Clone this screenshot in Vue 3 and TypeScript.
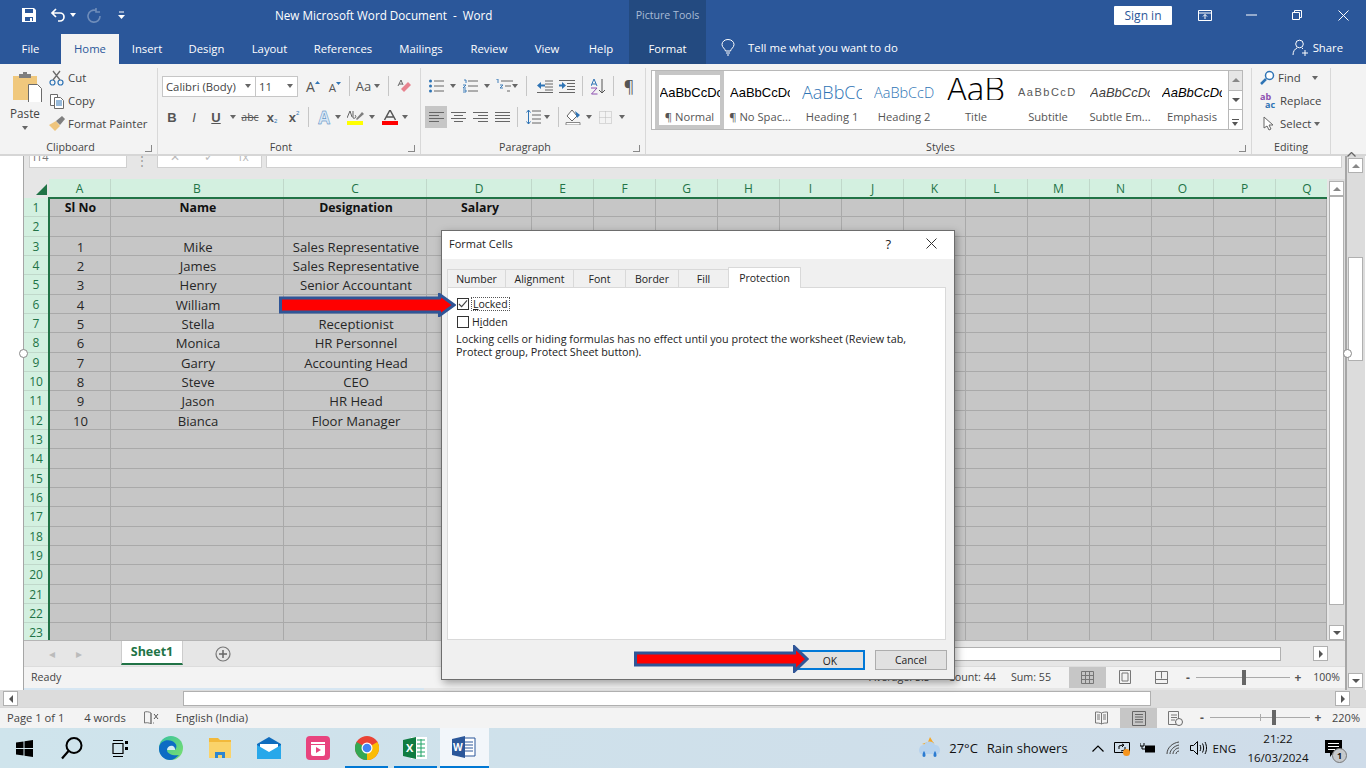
<script setup lang="ts">
const tabs: [string, number][] = [['File', 61], ['Home', 58], ['Insert', 56], ['Design', 63], ['Layout', 63], ['References', 84], ['Mailings', 72], ['Review', 64], ['View', 52], ['Help', 56], ['Format', 77]]
const styles = [
  ['AaBbCcDc', '¶ Normal', 'normal'], ['AaBbCcDc', '¶ No Spac...', 'nospace'], ['AaBbCc', 'Heading 1', 'h1'], ['AaBbCcD', 'Heading 2', 'h2'],
  ['AaB', 'Title', 'title'], ['AaBbCcD', 'Subtitle', 'subtitle'], ['AaBbCcDc', 'Subtle Em...', 'subtle'], ['AaBbCcDc', 'Emphasis', 'emph'],
]
const cols = 'ABCDEFGHIJKLMNOPQ'.split('')
const data: string[][] = [
  ['Sl No', 'Name', 'Designation', 'Salary'], [],
  ['1', 'Mike', 'Sales Representative'], ['2', 'James', 'Sales Representative'], ['3', 'Henry', 'Senior Accountant'],
  ['4', 'William', ''], ['5', 'Stella', 'Receptionist'], ['6', 'Monica', 'HR Personnel'], ['7', 'Garry', 'Accounting Head'],
  ['8', 'Steve', 'CEO'], ['9', 'Jason', 'HR Head'], ['10', 'Bianca', 'Floor Manager'],
]
const rows = Array.from({ length: 23 }, (_, i) => i + 1)
const dlgTabs = ['Number', 'Alignment', 'Font', 'Border', 'Fill', 'Protection']
function cell(r: number, c: number): string {
  return data[r - 1]?.[c] ?? ''
}
</script>

<template>
  <div class="app">
    <header class="titlebar">
      <div class="qat">
        <svg class="save" width="16" height="16" viewBox="0 0 16 16"><path d="M1 1h12l2 2v12H1z" fill="#fff"/><path d="M4 2h8v4H4z" fill="#2b579a"/><path d="M4 10h8v4H4z" fill="#2b579a"/><path d="M9 11h2v3H9z" fill="#fff"/></svg>
        <svg class="undo" width="16" height="16" viewBox="0 0 16 16"><path d="M6 2 2 6l4 4M2 6h8a4 4 0 0 1 0 8H8" fill="none" stroke="#fff" stroke-width="1.7"/></svg>
        <i class="caret white small"></i>
        <svg class="redo" width="16" height="16" viewBox="0 0 16 16"><path d="M10 3.500A6 6 0 1 0 14 9M10 1v4h4" fill="none" stroke="#6f8dba" stroke-width="1.6"/></svg>
        <svg class="cust" width="7" height="8" viewBox="0 0 7 8"><path d="M1 1h5" stroke="#fff"/><path d="M0 4h7L3.500 8z" fill="#fff"/></svg>
      </div>
      <div class="doc-title">New Microsoft Word Document &nbsp;-&nbsp; Word</div>
      <div class="context">Picture Tools</div>
      <div class="spacer"></div>
      <div class="signin">Sign in</div>
      <div class="win">
        <svg width="14" height="11" viewBox="0 0 14 11"><path d="M.5.5h13v10H.5zM.5 3h13M7 9V4.500M5 6.500l2-2 2 2" fill="none" stroke="#fff"/></svg>
      </div>
      <div class="win"><svg width="11" height="2" viewBox="0 0 11 2"><path d="M0 1h11" stroke="#fff"/></svg></div>
      <div class="win"><svg width="10" height="10" viewBox="0 0 10 10"><path d="M.5 2.500h7v7h-7zM2.500 2.500v-2h7v7h-2" fill="none" stroke="#fff"/></svg></div>
      <div class="win"><svg width="11" height="11" viewBox="0 0 11 11"><path d="m.5.5 10 10M10.500.5l-10 10" stroke="#fff"/></svg></div>
    </header>

    <nav class="tabs">
      <div v-for="t in tabs" :key="t[0]" class="tab" :class="{ active: t[0] === 'Home', fmt: t[0] === 'Format' }" :style="{ width: t[1] + 'px' }">{{ t[0] }}</div>
      <div class="tell">
        <svg width="14" height="17" viewBox="0 0 14 17"><path d="M4.500 12C4 9.500 1 8.500 1 5.500a6 5 0 0 1 12 0c0 3-3 4-3.500 6.500zM5 14h4M6 16h2" fill="none" stroke="#fff" stroke-width="1"/></svg>
        <span>Tell me what you want to do</span>
      </div>
      <div class="spacer"></div>
      <div class="share">
        <svg width="17" height="17" viewBox="0 0 17 17"><circle cx="7.500" cy="5" r="3.800" fill="none" stroke="#fff"/><path d="M1 16c0-4 2-6 4-7M10 9l1 1M10 14h6M13 11v6" fill="none" stroke="#fff"/></svg>
        <span>Share</span>
      </div>
    </nav>

    <section class="ribbon">
      <div class="grp g-clip">
        <div class="grp-body clip">
          <div class="paste">
            <svg class="paste-ic" width="30" height="30" viewBox="0 0 30 30"><path d="M0 4h24v24H0z" fill="#f0c87d"/><path d="M6 2h12v4H6z" fill="#7f7f7f"/><path d="M10 0h4v3h-4z" fill="#7f7f7f"/><path d="M15.500 12.500h9l4 4v15h-13z" fill="#fff" stroke="#6b6b6b"/></svg>
            <span>Paste</span>
            <i class="caret"></i>
          </div>
          <div class="clip-list">
            <div><svg width="16" height="16" viewBox="0 0 16 16"><circle cx="3.500" cy="12.500" r="2.500" fill="none" stroke="#2f74b5" stroke-width="1.200"/><circle cx="11.500" cy="12.500" r="2.500" fill="none" stroke="#2f74b5" stroke-width="1.200"/><path d="M4 10 11 1M11 10 4 1" stroke="#6b6b6b" stroke-width="1.300"/></svg>Cut</div>
            <div><svg width="16" height="16" viewBox="0 0 16 16"><path d="M1.500 1.500h7v11h-7z" fill="#fff" stroke="#6b6b6b"/><path d="M5.500 4.500h6l3 3v8h-9z" fill="#fff" stroke="#6b6b6b"/><path d="M7 8h6M7 10h6M7 12h6" stroke="#2f74b5"/></svg>Copy</div>
            <div><svg width="16" height="16" viewBox="0 0 16 16"><path d="M0 9 7 5l4 5-5 5c-2-2-4-4-6-6z" fill="#efc57d"/><path d="M7 5 13 0l3 3-5 6z" fill="#7f7f7f"/></svg>Format Painter</div>
          </div>
        </div>
        <div class="grp-label">Clipboard<i class="launch"></i></div>
      </div>

      <div class="grp g-font">
        <div class="grp-body col">
          <div class="row r1">
            <div class="sel w94"><span>Calibri (Body)</span><i class="caret"></i></div>
            <div class="sel w42"><span>11</span><i class="caret"></i></div>
            <span class="s s22 big">A<svg width="5" height="3" viewBox="0 0 5 3"><path d="M0 3h5L2.500 0z" fill="#2f74b5"/></svg></span>
            <span class="s s22 mid">A<svg width="5" height="3" viewBox="0 0 5 3"><path d="M0 0h5L2.500 3z" fill="#2f74b5"/></svg></span>
            <i class="sep"></i>
            <span class="s s26 aa">Aa<i class="caret"></i></span>
            <i class="sep s-gap"></i>
            <span class="s s22"><svg width="15" height="15" viewBox="0 0 15 15"><path d="m7 13 7-7-3-3-7 7z" fill="#e7838f"/><path d="M1 7 4 1l2 5M2 5h3" fill="none" stroke="#666"/></svg></span>
          </div>
          <div class="row r2">
            <span class="s s22 f"><b>B</b></span>
            <span class="s s22 f"><em>I</em></span>
            <span class="s s22 f u">U</span>
            <i class="caret c-u"></i>
            <span class="s s22 abc">abc</span>
            <span class="s s22 f sub"><b>x</b><small>2</small></span>
            <span class="s s22 f sup"><b>x</b><small>2</small></span>
            <i class="sep sp-f"></i>
            <span class="s s22 texta">A</span>
            <i class="caret c-a"></i>
            <span class="s s22"><svg width="17" height="15" viewBox="0 0 17 15"><path d="M0 8 3 1l2 6M6 1v7c2 1 4-1 2-3" fill="none" stroke="#555" stroke-width=".9"/><path d="m9 9 6-7 2 2-7 6z" fill="#7f7f7f"/><path d="M0 11h16v4H0z" fill="#ff0"/></svg></span>
            <i class="caret c-b"></i>
            <span class="s s22"><svg width="16" height="15" viewBox="0 0 16 15"><path d="M2.500 10 8 0l5.500 10M4.500 7h7" fill="none" stroke="#555" stroke-width="1.500"/><path d="M0 11h16v4H0z" fill="#f00"/></svg></span>
            <i class="caret c-c"></i>
          </div>
        </div>
        <div class="grp-label">Font<i class="launch"></i></div>
      </div>

      <div class="grp g-para">
        <div class="grp-body col">
          <div class="row r1 pr1">
            <span class="s s20"><svg width="15" height="14" viewBox="0 0 15 14"><path d="M5 2h10M5 7h10M5 12h10" stroke="#666"/><circle cx="1.500" cy="2" r="1.500" fill="#2f74b5"/><circle cx="1.500" cy="7" r="1.500" fill="#2f74b5"/><circle cx="1.500" cy="12" r="1.500" fill="#2f74b5"/></svg></span>
            <i class="caret c14"></i>
            <span class="s s20"><svg width="15" height="14" viewBox="0 0 15 14"><path d="M5 2h10M5 7h10M5 12h10" stroke="#666"/><path d="M1 1h2v3M0 6h3L0 9h3M0 11h3v2H0" fill="none" stroke="#2f74b5" stroke-width=".9"/></svg></span>
            <i class="caret c14"></i>
            <span class="s s20"><svg width="18" height="14" viewBox="0 0 18 14"><path d="M6 2h12M10 7h6M12 12h3" stroke="#666"/><path d="M1 0h2v4M5 6H8L5 9h3" fill="none" stroke="#2f74b5" stroke-width=".9"/></svg></span>
            <i class="caret c10"></i>
            <i class="sep sp16"></i>
            <span class="s s22"><svg width="16" height="13" viewBox="0 0 16 13"><path d="M8 1h8M8 4h8M8 7h8M8 10h8M0 12.500h16" stroke="#666"/><path d="M0 5.500 4 2v7zM4 4.500h4v2H4z" fill="#2f74b5"/></svg></span>
            <span class="s s22"><svg width="16" height="13" viewBox="0 0 16 13"><path d="M0 .5h16M8 3.500h8M8 6.500h8M8 9.500h8M0 12.500h16" stroke="#666"/><path d="M7 5.500 3 2v7zM0 4.500h3v2H0z" fill="#2f74b5"/></svg></span>
            <i class="sep sp-a"></i>
            <span class="s s22"><svg width="15" height="17" viewBox="0 0 15 17"><path d="M0 8 3 1l3 7M1 6h4" fill="none" stroke="#2f74b5"/><path d="M0 10h6L.5 16h6" fill="none" stroke="#8d4fb0"/><path d="M11 1v14M8 12l3 3 3-3" fill="none" stroke="#555"/></svg></span>
            <i class="sep sp-a"></i>
            <span class="s s22 pil">¶</span>
          </div>
          <div class="row r2 pr2">
            <span class="s s22 on"><svg width="15" height="11" viewBox="0 0 15 11"><path d="M0 .5h15M0 3.500h10M0 6.500h15M0 9.500h10" stroke="#666"/></svg></span>
            <span class="s s22"><svg width="15" height="11" viewBox="0 0 15 11"><path d="M0 .5h15M3 3.500h9M0 6.500h15M3 9.500h9" stroke="#666"/></svg></span>
            <span class="s s22"><svg width="15" height="11" viewBox="0 0 15 11"><path d="M0 .5h15M5 3.500h10M0 6.500h15M5 9.500h10" stroke="#666"/></svg></span>
            <span class="s s22"><svg width="15" height="11" viewBox="0 0 15 11"><path d="M0 .5h15M0 3.500h15M0 6.500h15M0 9.500h15" stroke="#666"/></svg></span>
            <i class="sep sp-b"></i>
            <span class="s s20"><svg width="15" height="16" viewBox="0 0 15 16"><path d="M6 2h9M6 6h9M6 10h9M6 14h9" stroke="#666"/><path d="M2.500 1v14M.5 3.500l2-2.500 2 2.500M.5 12.500l2 2.500 2-2.500" fill="none" stroke="#2f74b5"/></svg></span>
            <i class="caret c-d"></i>
            <i class="sep sp-c"></i>
            <span class="s s22"><svg width="17" height="16" viewBox="0 0 17 16"><path d="M7 1 2 7l5 5 5-5z" fill="#fff" stroke="#666"/><path d="m10 2 5 4-3 3z" fill="#2f74b5"/><path d="M1 13.500h14V16H1z" fill="#fff" stroke="#888"/></svg></span>
            <i class="caret c-e2"></i>
            <span class="s s22"><svg width="13" height="13" viewBox="0 0 13 13"><path d="M.5.5h12v12H.5zM6.500.5v12M.5 6.500h12" fill="none" stroke="#bbb" stroke-dasharray="1 1"/></svg></span>
            <i class="caret c-f"></i>
          </div>
        </div>
        <div class="grp-label">Paragraph<i class="launch"></i></div>
      </div>

      <div class="grp g-styles">
        <div class="grp-body">
          <div class="gallery">
            <div v-for="s in styles" :key="s[1]" class="style" :class="s[2]">
              <div class="sample"><span>{{ s[0] }}</span></div>
              <div class="lbl">{{ s[1] }}</div>
            </div>
            <div class="gal-scroll">
              <div class="gs up"><i class="tri-up"></i></div>
              <div class="gs"><i class="tri-down"></i></div>
              <div class="gs"><i class="more"></i></div>
            </div>
          </div>
        </div>
        <div class="grp-label">Styles<i class="launch"></i></div>
      </div>

      <div class="grp g-edit">
        <div class="grp-body edit-list">
          <div><svg width="15" height="15" viewBox="0 0 15 15"><circle cx="9.500" cy="5.500" r="4" fill="#fff" stroke="#2f74b5" stroke-width="1.500"/><path d="M6 9 1 14" stroke="#2f74b5" stroke-width="2.500"/></svg>Find<i class="caret c-e"></i></div>
          <div><svg width="17" height="15" viewBox="0 0 17 15"><text x="0" y="7" font-size="9" font-weight="700" fill="#8d4fb0" font-family="Open Sans">ab</text><text x="5" y="15" font-size="9" font-weight="700" fill="#2f74b5" font-family="Open Sans">ac</text></svg>Replace</div>
          <div><svg class="cursor" width="11" height="15" viewBox="0 0 11 15"><path d="M1 1v11l3-2 2 4 2-1-2-4h4z" fill="#fff" stroke="#666"/></svg>Select<i class="caret"></i></div>
        </div>
        <div class="grp-label edit-label">Editing</div>
      </div>
      <div class="collapse"><svg width="9" height="5" viewBox="0 0 9 5"><path d="m.5 4.500 4-4 4 4" fill="none" stroke="#666" stroke-width="1.300"/></svg></div>
    </section>

    <section class="doc">
      <div class="margin"></div>
      <div class="excel">
        <div class="fx">
          <div class="box name"><span>I14</span></div>
          <div class="colon">⋮</div>
          <div class="box fxb"><span>✕</span><span>✓</span><span><i>fx</i></span></div>
          <div class="box input"></div>
        </div>
        <div class="sheet-wrap">
          <div class="sheet">
            <div class="corner"><i></i></div>
            <div v-for="c in cols" :key="c" class="ch" :class="{ last: c === 'Q' }">{{ c }}</div>
            <template v-for="r in rows" :key="r">
              <div class="rh">{{ r }}</div>
              <div v-for="(c, i) in cols" :key="c" class="cell" :class="{ bold: r === 1 }">{{ cell(r, i) }}</div>
            </template>
          </div>
          <div class="xvs">
            <div class="sb"><i class="tri-up"></i></div>
            <div class="xthumb"></div>
            <div class="sb"><i class="tri-down"></i></div>
          </div>
        </div>
        <div class="tabbar">
          <span class="nav">◂</span><span class="nav">▸</span>
          <div class="sheettab">Sheet1</div>
          <svg class="plus" width="16" height="16" viewBox="0 0 16 16"><circle cx="8" cy="8" r="7" fill="none" stroke="#777" stroke-width="1.200"/><path d="M8 4v8M4 8h8" stroke="#666" stroke-width="1.500"/></svg>
          <div class="spacer"></div>
          <div class="hthumb"></div>
          <div class="sb hbtn"><i class="tri-right"></i></div>
        </div>
        <div class="xstatus">
          <span>Ready</span>
          <div class="spacer"></div>
          <span class="st-a">Average: 5.5</span>
          <span class="st-c">Count: 44</span>
          <span class="st-s">Sum: 55</span>
          <div class="vw on"><svg width="13" height="13" viewBox="0 0 13 13"><path d="M.5.5h12v12H.5zM4.500.5v12M8.500.5v12M.5 4.500h12M.5 8.500h12" fill="none" stroke="#777"/></svg></div>
          <div class="vw"><svg width="12" height="14" viewBox="0 0 12 14"><path d="M.5.5h11v13H.5zM3 3h6v8H3z" fill="none" stroke="#777"/></svg></div>
          <div class="vw"><svg width="13" height="13" viewBox="0 0 13 13"><path d="M.5.5h12v12H.5zM6.500.5v7M.5 8.500h12" fill="none" stroke="#777"/></svg></div>
          <div class="zoom z1"><b>-</b><div class="track"><i class="knob"></i></div><b>+</b></div>
          <span class="pct">100%</span>
        </div>
        <div class="strip"></div>
      </div>
      <div class="wvs">
        <div class="sb"><i class="tri-up"></i></div>
        <div class="wthumb"></div>
        <div class="spacer"></div>
        <div class="sb"><i class="tri-down"></i></div>
      </div>
    </section>

    <section class="wordhs">
      <div class="sb hl"><i class="tri-left"></i></div>
      <div class="wh-thumb"></div>
      <div class="spacer"></div>
      <div class="sb hr"><i class="tri-right"></i></div>
    </section>

    <footer class="wstatus">
      <span class="pg">Page 1 of 1</span>
      <span class="wd">4 words</span>
      <svg class="proof" width="15" height="13" viewBox="0 0 15 13"><path d="M7 2C5 .5 2 .5.500 1v11c2-.5 4.500-.5 6.500 1V2zM7 2v11M9 12h1" fill="none" stroke="#777"/><path d="m10 3 4 5M14 3l-4 5" stroke="#555"/></svg>
      <span class="lang">English (India)</span>
      <div class="spacer"></div>
      <div class="vw w-v"><svg width="13" height="14" viewBox="0 0 13 14"><path d="M6.500 2C5 1 2 1 .5 1v11c2 0 4.500 0 6 1 1.500-1 4-1 6-1V1c-1.500 0-4.500 0-6 1zM6.500 2v11M2 4h3M2 6h3M2 8h3M8 4h3M8 6h3M8 8h3" fill="none" stroke="#777"/></svg></div>
      <div class="vw w-v on"><svg width="14" height="15" viewBox="0 0 14 15"><path d="M.5.5h13v14H.5zM3 3.500h8M3 6h8M3 8.500h8M3 11h8" fill="none" stroke="#666"/></svg></div>
      <div class="vw w-v"><svg width="15" height="15" viewBox="0 0 15 15"><path d="M.5.5h10v13H.5zM3 4h6M3 6.500h6M3 9h4" fill="none" stroke="#777"/><circle cx="11" cy="11" r="3.500" fill="#f3f3f3" stroke="#666"/></svg></div>
      <div class="zoom z2"><b>-</b><div class="track"><i class="mid-tick"></i><i class="knob"></i></div><b>+</b></div>
      <span class="pct p2">220%</span>
    </footer>

    <footer class="taskbar">
      <div class="tb"><svg width="17" height="17" viewBox="0 0 17 17"><path d="M0 2.500 7.500 1.400V8H0zM8.500 1.300 17 0v8H8.500zM0 9h7.500v6.600L0 14.500zM8.500 9H17v8l-8.500-1.300z" fill="#000"/></svg></div>
      <div class="tb"><svg width="24" height="24" viewBox="0 0 24 24"><circle cx="14" cy="9.500" r="7.500" fill="none" stroke="#000" stroke-width="2"/><path d="M8.500 15 2 22.500" stroke="#000" stroke-width="2.200"/></svg></div>
      <div class="tb"><svg width="17" height="17" viewBox="0 0 17 17"><path d="M1 3.500h10v10H1zM1 .5h10M1 16.500h10" fill="none" stroke="#000" stroke-width="1.200"/><path d="M13 1h3v3h-3zM13 7h3v3h-3z" fill="#000"/></svg></div>
      <div class="tb"><svg width="24" height="24" viewBox="0 0 24 24"><defs><linearGradient id="eg" x1="0" y1="0" x2="1" y2="1"><stop offset="0" stop-color="#35c1a0"/><stop offset="1" stop-color="#7ee26c"/></linearGradient></defs><circle cx="12" cy="12" r="12" fill="url(#eg)"/><path d="M0 13C0 5 8 3 13 5c4 2 6 5 3 9H8c0 4 6 6 12 5-3 3-6 5-9 5C5 24 0 19 0 13z" fill="#0c6cc4"/><path d="M8 14c0-3 3-5 6-4 2 1 2 3 2 4z" fill="#d4ecf2"/></svg></div>
      <div class="tb"><svg width="22" height="20" viewBox="0 0 22 20"><path d="M0 0h9l2 2h11v18H0z" fill="#f2b93b"/><path d="M0 4h22v16H0z" fill="#fad36a"/><path d="M6 14h10v6H6z" fill="#2f86d0"/><path d="M9 17h4v3H9z" fill="#fad36a"/></svg></div>
      <div class="tb"><svg width="24" height="22" viewBox="0 0 24 22"><path d="M12 0 24 7v15H0V7z" fill="#0f6cbd"/><path d="M3 7h18v6l-9 5-9-5z" fill="#fff"/><path d="m0 8 12 7 12-7v14H0z" fill="#28a8ea"/></svg></div>
      <div class="tb"><svg width="24" height="24" viewBox="0 0 24 24"><rect width="24" height="24" rx="4" fill="#e8447e"/><path d="M5 9h14v9a2 2 0 0 1-2 2H7a2 2 0 0 1-2-2z" fill="#fff"/><path d="M5 6h14v2H5z" fill="#fff"/><path d="m10 11 5 3-5 3z" fill="#e8447e"/></svg></div>
      <div class="tb run"><svg width="24" height="24" viewBox="0 0 24 24"><circle cx="12" cy="12" r="12" fill="#ea4335"/><path d="M12 12 22.400 6A12 12 0 0 1 12 24z" fill="#fbbc05"/><path d="M12 12 12 24A12 12 0 0 1 1.600 6z" fill="#34a853"/><circle cx="12" cy="12" r="5.500" fill="#fff"/><circle cx="12" cy="12" r="4.300" fill="#4285f4"/></svg></div>
      <div class="tb run"><svg width="24" height="22" viewBox="0 0 24 22"><path d="M8 0h16v22H8z" fill="#fff"/><path d="M14 3h8M14 7h8M14 11h8M14 15h8M14 19h8M18 2v18" stroke="#21a366"/><path d="M0 3 13 0v22L0 19z" fill="#107c41"/><text x="3" y="15" font-size="11" font-weight="700" fill="#fff" font-family="Open Sans">X</text></svg></div>
      <div class="tb tb-on"><svg width="24" height="22" viewBox="0 0 24 22"><path d="M8 2h15v18H8z" fill="#fff" stroke="#2b579a"/><path d="M13 6h8M13 9h8M13 12h8M13 15h8" stroke="#2b579a"/><path d="M0 3 13 0v22L0 19z" fill="#2b579a"/><text x="1" y="15" font-size="10" font-weight="700" fill="#fff" font-family="Open Sans">W</text></svg></div>
      <div class="spacer"></div>
      <svg class="wx" width="24" height="26" viewBox="0 0 24 26"><path d="M4 9 10 7l2-5 3 5c2 1 1 3 0 4z" fill="#f5a623"/><path d="M3 19a5 5 0 0 1 3-9 6 6 0 0 1 11 0 5 5 0 0 1 3 9z" fill="#b7d3ee"/><path d="M6 16c-2 3-2 6 0 6s2-3 0-6zM17 16c-2 3-2 6 0 6s2-3 0-6z" fill="#2a7bd1"/></svg>
      <span class="temp">27°C</span>
      <span class="cond">Rain showers</span>
      <svg class="chev" width="12" height="7" viewBox="0 0 12 7"><path d="m.5 6.500 5.500-5.500 5.500 5.500" fill="none" stroke="#000" stroke-width="1.200"/></svg>
      <svg class="tray t1" width="16" height="15" viewBox="0 0 16 15"><path d="M.5 1.500h15v10H.5z" fill="none" stroke="#000"/><path d="M5 8V5l4-1M8 3l2 1-2 2M11 6v3l-4 1" fill="none" stroke="#000"/><circle cx="12.500" cy="11.500" r="3.500" fill="#f5941d"/></svg>
      <svg class="tray t2" width="16" height="11" viewBox="0 0 16 11"><path d="M5 2.500h10v7H5z" fill="#000"/><path d="M0 0v3h4V0M2 3v3h3" fill="none" stroke="#000"/></svg>
      <svg class="tray t3" width="14" height="14" viewBox="0 0 14 14"><path d="M1 13C1 7 6 2 13 1M4 13c0-4 4-8 9-9M7 13c0-3 3-6 6-6M10 13c0-1 1-3 3-3" fill="none" stroke="#444"/></svg>
      <svg class="tray t4" width="17" height="14" viewBox="0 0 17 14"><path d="M.5 4.500h3l4-4v13l-4-4h-3zM10 4c1 2 1 4 0 6M12.500 2.500c1.500 3 1.500 6 0 9M15 1c2 4 2 8 0 12" fill="none" stroke="#000"/></svg>
      <span class="eng">ENG</span>
      <div class="clock"><span>21:22</span><span>16/03/2024</span></div>
      <div class="notif">
        <svg width="17" height="17" viewBox="0 0 17 17"><path d="M0 0h17v13H8l-3 4v-4H0z" fill="#000"/><path d="M3 3.500h11M3 6.500h11M3 9.500h7" stroke="#fff"/></svg>
        <span class="nb">1</span>
      </div>
    </footer>

    <i class="handle h-l"></i>
    <i class="handle h-r"></i>

    <div class="dialog">
      <div class="dlg-title">
        <span>Format Cells</span>
        <div class="spacer"></div>
        <span class="help">?</span>
        <svg width="11" height="11" viewBox="0 0 11 11"><path d="m.5.5 10 10M10.500.5l-10 10" stroke="#333"/></svg>
      </div>
      <div class="dlg-body">
        <div class="dlg-tabs">
          <div v-for="t in dlgTabs" :key="t" class="dt" :class="['dt-' + t.toLowerCase(), { cur: t === 'Protection' }]">{{ t }}</div>
        </div>
        <div class="panel">
          <label class="chk">
            <span class="cb"><svg width="11" height="10" viewBox="0 0 11 10"><path d="m1 5 3 3 6-7" fill="none" stroke="#444" stroke-width="1.200"/></svg></span>
            <span class="focus"><u>L</u>ocked</span>
          </label>
          <label class="chk c2">
            <span class="cb"></span>
            <span>H<u>i</u>dden</span>
          </label>
          <p>Locking cells or hiding formulas has no effect until you protect the worksheet (Review tab,<br>Protect group, Protect Sheet button).</p>
        </div>
        <div class="dlg-btns">
          <div class="btn ok">OK</div>
          <div class="btn">Cancel</div>
        </div>
      </div>
    </div>

    <svg class="arrow a1" width="177" height="24" viewBox="0 0 177 24"><path d="M1.500 5h159V1.500L175 12l-14.500 10.500V19H1.500z" fill="#f00" stroke="#2f5597" stroke-width="3"/></svg>
    <svg class="arrow a2" width="175" height="28" viewBox="0 0 175 28"><path d="M1.500 8h159V2L173 14l-12.500 12v-6H1.500z" fill="#f00" stroke="#2f5597" stroke-width="3"/></svg>
  </div>
</template>

<style>
html, body { margin: 0; padding: 0; background: #fff; }
</style>

<style scoped>
.app { position: relative; width: 1366px; height: 768px; overflow: hidden; display: flex; flex-direction: column; font-family: "Open Sans", "Noto Sans", sans-serif; font-size: 12px; color: #444; background: #fff; }
.spacer { flex: 1; }
i { font-style: normal; display: block; }

.titlebar { height: 32px; background: #2b579a; display: flex; align-items: center; color: #fff; flex: none; padding-bottom: 2px; box-sizing: border-box; }
.qat { width: 275px; display: flex; align-items: center; flex: none; }
.save { margin-left: 21px; }
.undo { margin-left: 13px; }
.caret { width: 0; height: 0; border-left: 3.5px solid transparent; border-right: 3.5px solid transparent; border-top: 4px solid #666; flex: none; }
.caret.white { border-top-color: #fff; margin-left: 4px; }
.redo { margin-left: 10px; }
.cust { margin-left: 16px; }
.doc-title { width: 354px; flex: none; font-size: 11.7px; white-space: nowrap; color: #fff; }
.context { width: 77px; height: 32px; line-height: 30px; margin-bottom: -2px; background: #234a80; color: #a9bcd6; text-align: center; font-size: 10.6px; flex: none; }
.signin { width: 58px; height: 19px; line-height: 19px; background: #fff; color: #2b579a; text-align: center; font-size: 12px; margin-right: 10px; border-radius: 1px; }
.win { width: 46px; display: flex; justify-content: center; }

.tabs { height: 32px; background: #2b579a; display: flex; color: #fff; flex: none; }
.tab { line-height: 33px; text-align: center; font-size: 11.3px; flex: none; }
.tab.active { background: #f3f3f3; color: #2b579a; margin-top: 2px; line-height: 29px; }
.tab.fmt { background: #234a80; }
.tell { display: flex; align-items: center; margin-left: 15px; gap: 13px; font-size: 11.4px; white-space: nowrap; padding-bottom: 1px; }
.share { display: flex; align-items: center; gap: 4px; margin-right: 23px; font-size: 11.3px; padding-bottom: 1px; }

.ribbon { height: 92px; background: #f3f3f3; display: flex; border-bottom: 2px solid #d6d6d6; box-sizing: border-box; flex: none; position: relative; }
.grp { display: flex; flex-direction: column; border-right: 1px solid #d8d8d8; margin: 4px 0 0; box-sizing: border-box; flex: none; }
.grp-body { flex: 1; min-height: 0; }
.grp-label { height: 14px; line-height: 14px; text-align: center; font-size: 10.7px; color: #444; position: relative; padding-right: 16px; }
.edit-label { padding-right: 0; }
.launch { position: absolute; right: 5px; bottom: 2px; width: 6px; height: 6px; border-left: 1px solid #888; border-bottom: 1px solid #888; transform: scaleX(-1); }
.g-clip { width: 158px; }
.g-font { width: 263px; }
.g-para { width: 225px; }
.g-styles { width: 606px; }
.g-edit { width: 79px; }
.clip { display: flex; padding: 0 0 0 7px; }
.paste { width: 36px; display: flex; flex-direction: column; align-items: center; font-size: 11.7px; padding-top: 4px; }
.paste-ic { margin-left: 6px; }
.paste span { line-height: 16px; margin-top: 3px; }
.paste .caret { margin-top: 5px; }
.clip-list { margin: -2px 0 0 6px; font-size: 11.4px; }
.clip-list div { height: 23px; display: flex; align-items: center; gap: 3px; white-space: nowrap; }
.col { display: flex; flex-direction: column; }
.row { display: flex; align-items: center; }
.r1 { height: 22px; margin-top: 7px; padding-left: 4px; }
.r2 { height: 22px; margin-top: 9px; padding-left: 3px; }
.sel { height: 21px; background: #fff; border: 1px solid #c6c6c6; box-sizing: border-box; display: flex; align-items: center; justify-content: space-between; padding: 0 4px 0 3px; font-size: 11.3px; flex: none; }
.w94 { width: 94px; }
.w42 { width: 43px; margin-left: -1px; margin-right: 4px; }
.s { display: inline-flex; align-items: center; justify-content: center; height: 22px; flex: none; color: #555; position: relative; }
.s22 { width: 22px; }
.s20 { width: 20px; }
.s26 { width: 26px; }
.big { font-size: 14px; }
.mid { font-size: 11.5px; padding-top: 2px; box-sizing: border-box; }
.big svg, .mid svg { margin: -8px 0 0 0; }
.aa { font-size: 13px; gap: 3px; width: 30px; }
.sep { width: 1px; height: 20px; background: #c6c6c6; flex: none; margin: 0 3px; }
.s-gap { margin: 0 4px 0 5px; }
.f { font-size: 13px; font-family: "Liberation Sans", sans-serif; }
.u { text-decoration: underline; font-weight: 700; }
.abc { font-size: 10.5px; text-decoration: line-through; }
.sub small { font-size: 6px; color: #2f74b5; align-self: flex-end; margin-bottom: 4px; }
.sup small { font-size: 6px; color: #2f74b5; align-self: flex-start; margin-top: 4px; }
.c-u { margin: 0 3px 0 3px; }
.sp-f { margin: 0 4px 0 3px; }
.c-a { margin: 0 3.5px 0 0; }
.c-b { margin: 0 3.5px 0 2.5px; }
.c-c { margin: 0 0 0 1.5px; }
.c14 { margin: 0 4px; }
.c10 { margin: 0 2px 0 -2px; }
.sp16 { margin: 0 7px 0 6px; }
.sp-a { margin: 0 4px; }
.sp-b { margin: 0 5px 0 4px; }
.c-d { margin: 0 0 0 .5px; }
.sp-c { margin: 0 4px 0 8px; }
.c-e2 { margin: 0 2px 0 1.5px; }
.c-f { margin: 0 0 0 2.5px; }
.texta { color: #2f74b5; font-size: 17px; font-weight: 700; -webkit-text-stroke: .4px #2f74b5; -webkit-text-fill-color: #d9e8f6; }
.pr1 { padding-left: 5px; }
.pr2 { padding-left: 4px; }
.on { background: #c6c6c6; }
.pil { font-size: 16px; color: #555; }
.g-styles .grp-body { padding: 2px 0 0 5px; }
.gallery { width: 592px; height: 60px; background: #fff; border: 1px solid #b8b8b8; display: flex; box-sizing: border-box; position: relative; padding-left: 3px; }
.style { width: 72px; flex: none; display: flex; flex-direction: column; align-items: center; box-sizing: border-box; padding: 0 1px; }
.style.normal { width: 69px; border: 4px solid #c6c6c6; margin-top: 0; height: 58px; }
.sample { height: 38px; width: 60px; padding-top: 4px; box-sizing: border-box; overflow: hidden; display: flex; align-items: center; justify-content: flex-start; white-space: nowrap; color: #000; font-size: 13px; font-family: "Liberation Sans", sans-serif; flex: none; }
.style.normal .sample { height: 34px; padding-top: 0; }
.lbl { font-size: 11.2px; color: #555; white-space: nowrap; line-height: 16px; }
.h1 .sample { font-size: 18px; color: #2e74b5; font-family: "Open Sans", sans-serif; font-weight: 300; }
.h2 .sample { font-size: 14.5px; color: #2e74b5; font-family: "Open Sans", sans-serif; font-weight: 300; }
.style.title .sample { height: 22px; padding-top: 0; margin: 7px 0 9px; font-size: 33px; justify-content: center; align-items: flex-start; font-family: "Open Sans", sans-serif; font-weight: 300; }
.title .sample span { line-height: 22px; }
.subtitle .sample { letter-spacing: 1.5px; color: #595959; font-size: 11px; }
.subtle .sample { font-style: italic; color: #404040; }
.emph .sample { font-style: italic; }
.gal-scroll { width: 14px; margin-left: auto; border-left: 1px solid #b8b8b8; display: flex; flex-direction: column; }
.gs { flex: 1; display: flex; align-items: center; justify-content: center; border-bottom: 1px solid #b8b8b8; }
.gs:last-child { border-bottom: 0; }
.gs.up { background: #e6e6e6; }
.tri-up { width: 0; height: 0; border-left: 4px solid transparent; border-right: 4px solid transparent; border-bottom: 4px solid #888; }
.tri-down { width: 0; height: 0; border-left: 4px solid transparent; border-right: 4px solid transparent; border-top: 4px solid #555; }
.tri-left { width: 0; height: 0; border-top: 4px solid transparent; border-bottom: 4px solid transparent; border-right: 4px solid #555; }
.tri-right { width: 0; height: 0; border-top: 4px solid transparent; border-bottom: 4px solid transparent; border-left: 4px solid #555; }
.more { width: 7px; height: 0; border-top: 1px solid #555; position: relative; }
.more::after { content: ""; position: absolute; top: 2px; left: 0; border-left: 3.500px solid transparent; border-right: 3.500px solid transparent; border-top: 4px solid #555; }
.edit-list { padding: 0 0 0 8px; margin-top: -2px; font-size: 11.4px; }
.edit-list div { height: 23px; display: flex; align-items: center; gap: 3px; white-space: nowrap; }
.cursor { margin: 0 3px; }
.c-e { margin-left: 8px; }
.collapse { position: absolute; left: 1347px; top: 80px; }

.doc { height: 534px; flex: none; display: flex; background: #fff; }
.margin { width: 23px; flex: none; }
.excel { width: 1324px; flex: none; border-left: 1px solid #a6a6a6; border-right: 2px solid #a6a6a6; box-sizing: border-box; background: #e6e6e6; display: flex; flex-direction: column; }
.fx { height: 23px; display: flex; align-items: flex-start; flex: none; overflow: hidden; }
.box { background: #fff; border: 1px solid #d0d0d0; border-top: 0; height: 12px; box-sizing: border-box; color: #777; overflow: hidden; }
.name { width: 98px; margin-left: 5px; padding-left: 3px; line-height: 2px; font-size: 11px; }
.colon { width: 30px; text-align: center; line-height: 10px; color: #999; }
.fxb { width: 105px; display: flex; justify-content: space-around; line-height: 2px; color: #bbb; font-size: 12px; }
.input { width: 1076px; margin-left: 4px; }
.sheet-wrap { height: 461px; display: flex; flex: none; overflow: hidden; }
.sheet { width: 1303px; flex: none; display: grid; grid-template-columns: 25px 62px 173px 143px 105px repeat(12, 62px) 51px; grid-template-rows: 19px repeat(23, 19.340px); position: relative; }
.sheet::before { content: ""; position: absolute; left: 24px; top: 18px; right: 0; bottom: 0; border-left: 2px solid #217346; border-top: 2px solid #217346; pointer-events: none; z-index: 2; }
.corner { background: #e6e6e6; position: relative; }
.corner i { position: absolute; right: 2px; bottom: 3px; width: 0; height: 0; border-bottom: 11px solid #217346; border-left: 11px solid transparent; }
.ch { background: #d3f0e0; border-right: 1px solid #c0d8ca; text-align: center; line-height: 19px; font-size: 12px; color: #217346; box-sizing: border-box; }
.ch.last { padding-left: 11px; border-right: 0; }
.rh { background: #d3f0e0; text-align: center; line-height: 20px; color: #217346; font-size: 12px; border-bottom: 1px solid #c0d8ca; box-sizing: border-box; padding-right: 1px; }
.cell { background: #c6c6c6; border-right: 1px solid #a9a9a9; border-bottom: 1px solid #a9a9a9; box-sizing: border-box; text-align: center; line-height: 20px; font-size: 13.100px; color: #262626; white-space: nowrap; overflow: hidden; padding-left: 2px; }
.cell.bold { font-weight: 700; color: #111; font-size: 12.300px; }
.xvs { width: 16px; margin-left: 2px; padding-top: 2px; display: flex; flex-direction: column; background: #dcdcdc; }
.sb { background: #fff; border: 1px solid #b0b0b0; box-sizing: border-box; width: 15px; height: 15px; display: flex; align-items: center; justify-content: center; flex: none; }
.xthumb { width: 15px; height: 409px; background: #fff; border: 1px solid #b0b0b0; box-sizing: border-box; margin-bottom: 20px; }
.tabbar { height: 26px; display: flex; align-items: center; flex: none; border-top: 1px solid #b5b5b5; box-sizing: border-box; }
.nav { width: 27px; text-align: center; color: #bbb; font-size: 12px; }
.nav:first-child { margin-left: 14px; }
.sheettab { width: 62px; height: 24px; margin: -1px 0 0 29px; background: #fff; color: #217346; font-weight: 700; font-size: 12.500px; text-align: center; line-height: 22px; border-bottom: 2px solid #217346; box-sizing: border-box; border-left: 1px solid #ccc; border-right: 1px solid #ccc; }
.plus { margin-left: 32px; }
.hthumb { width: 400px; height: 14px; background: #fff; border: 1px solid #b0b0b0; box-sizing: border-box; margin-right: 32px; }
.hbtn { margin-right: 17px; }
.xstatus { height: 22px; background: #f3f3f3; display: flex; align-items: center; padding: 0 0 1px 7px; flex: none; font-size: 10.700px; border-top: 1px solid #dcdcdc; box-sizing: border-box; }
.st-c { margin-left: 18px; }
.st-s { margin-left: 15px; margin-right: 18px; }
.vw { width: 37px; height: 21px; display: flex; align-items: center; justify-content: center; flex: none; }
.vw.on { background: #c6c6c6; }
.zoom { display: flex; align-items: center; color: #555; font-size: 12px; }
.zoom b { width: 16px; text-align: center; }
.track { height: 1px; background: #aaa; position: relative; }
.knob { position: absolute; top: -7px; width: 4px; height: 15px; background: #666; }
.z1 .track { width: 94px; }
.z1 .knob { left: 46px; }
.pct { width: 30px; text-align: right; margin: 0 5px 0 4px; font-size: 10.500px; }
.strip { height: 2px; background: #d6e6f2; flex: none; width: 400px; }
.wvs { width: 18px; flex: none; background: #dcdcdc; padding: 2px 0 2px 1px; box-sizing: border-box; display: flex; flex-direction: column; }
.wvs .sb { width: 15px; height: 15px; }
.wthumb { width: 15px; height: 104px; background: #fff; border: 1px solid #b0b0b0; box-sizing: border-box; margin-top: 84px; }

.wordhs { height: 17px; flex: none; background: #dcdcdc; display: flex; align-items: center; }
.hl { margin-left: 3px; }
.wh-thumb { width: 968px; height: 15px; background: #fff; border: 1px solid #b0b0b0; box-sizing: border-box; margin-left: 165px; }
.hr { margin-right: 16px; }
.wstatus { height: 21px; flex: none; background: #f3f3f3; display: flex; align-items: center; font-size: 11.200px; border-top: 1px solid #d8d8d8; box-sizing: border-box; padding-bottom: 2px; }
.pg { margin-left: 7px; }
.wd { margin-left: 20px; }
.proof { margin-left: 18px; }
.lang { margin-left: 17px; }
.w-v { height: 20px; margin-bottom: -2px; }
.z2 .track { width: 100px; }
.z2 .knob { left: 62px; }
.mid-tick { position: absolute; left: 50px; top: -3px; width: 1px; height: 7px; background: #aaa; }
.pct.p2 { margin: 0 6px 0 0; width: 34px; font-size: 11px; }

.taskbar { height: 40px; flex: none; background: linear-gradient(90deg, #cfe4ec, #cfdce9); display: flex; align-items: center; color: #111; font-size: 12px; }
.tb { width: 48.800px; height: 40px; display: flex; align-items: center; justify-content: center; flex: none; box-sizing: border-box; position: relative; }
.tb:nth-child(-n+3) { width: 48px; }
.tb:nth-child(4) { margin-left: 3px; }
.tb-on { background: #f2f6fa; border-bottom: 2px solid #0078d4; }
.run::after { content: ""; position: absolute; left: 3px; right: 3px; bottom: 0; height: 2px; background: #0078d4; }
.wx { margin-right: 7px; }
.temp { font-size: 13px; }
.cond { margin-left: 9px; font-size: 13px; }
.chev { margin-left: 24px; }
.tray { margin-left: 10px; }
.eng { margin-left: 6px; font-size: 11.500px; }
.clock { width: 70px; margin-left: 7px; display: flex; flex-direction: column; align-items: center; font-size: 11.500px; line-height: 19px; }
.notif { position: relative; margin-left: 12px; margin-right: 24px; height: 17px; }
.nb { position: absolute; left: 7px; top: 8px; width: 15px; height: 15px; border-radius: 50%; background: #c6c9cc; border: 1px solid #777; box-sizing: border-box; text-align: center; line-height: 13px; font-size: 9px; font-weight: 700; }

.handle { position: absolute; top: 349px; width: 9px; height: 9px; border-radius: 50%; background: #fff; border: 1px solid #888; box-sizing: border-box; }
.h-l { left: 19px; }
.h-r { left: 1343px; }

.dialog { position: absolute; left: 441px; top: 230px; width: 514px; height: 450px; background: #f0f0f0; border: 1px solid #6d6d6d; box-sizing: border-box; box-shadow: 2px 3px 8px rgba(0,0,0,.35); display: flex; flex-direction: column; color: #222; }
.dlg-title { height: 28px; background: #fff; display: flex; align-items: center; padding: 0 17px 3px 7px; font-size: 11px; flex: none; box-sizing: border-box; }
.help { font-size: 13px; margin-right: 35px; }
.dlg-body { flex: 1; display: flex; flex-direction: column; padding: 7px 8px 0 5px; min-height: 0; }
.dlg-tabs { height: 21px; display: flex; align-items: flex-end; flex: none; }
.dt { height: 18px; line-height: 19px; text-align: center; font-size: 10.500px; border: 1px solid #d9d9d9; border-bottom: 0; margin-right: -1px; box-sizing: border-box; background: #f0f0f0; }
.dt-number { width: 59px; }
.dt-alignment { width: 69px; }
.dt-font { width: 53px; }
.dt-border { width: 54px; }
.dt-fill { width: 51px; }
.dt-protection { width: 73px; }
.cur { height: 21px; background: #fff; line-height: 20px; position: relative; top: 1px; z-index: 1; }
.panel { height: 353px; background: #fff; border: 1px solid #d9d9d9; box-sizing: border-box; padding: 9px 8px 0 9px; flex: none; font-size: 10.500px; width: 499px; }
.chk { display: flex; align-items: center; gap: 3px; height: 14px; }
.c2 { margin-top: 4px; }
.cb { width: 12px; height: 12px; border: 1px solid #333; background: #fff; box-sizing: border-box; display: flex; align-items: center; justify-content: center; flex: none; }
.focus { outline: 1px dotted #555; padding: 0 1px; line-height: 12px; }
.panel p { margin: 4px 0 0 -1px; line-height: 12.500px; font-size: 10.800px; white-space: nowrap; }
.dlg-btns { flex: 1; display: flex; justify-content: flex-end; align-items: flex-start; gap: 10px; padding: 10px 0 0 0; margin-right: -1px; }
.btn { width: 72px; height: 20px; line-height: 18px; text-align: center; background: #e1e1e1; border: 1px solid #adadad; box-sizing: border-box; font-size: 10.300px; }
.ok { border: 2px solid #0078d7; width: 70px; }

.arrow { position: absolute; }
.a1 { left: 279px; top: 293px; }
.a2 { left: 634px; top: 645px; }
</style>
